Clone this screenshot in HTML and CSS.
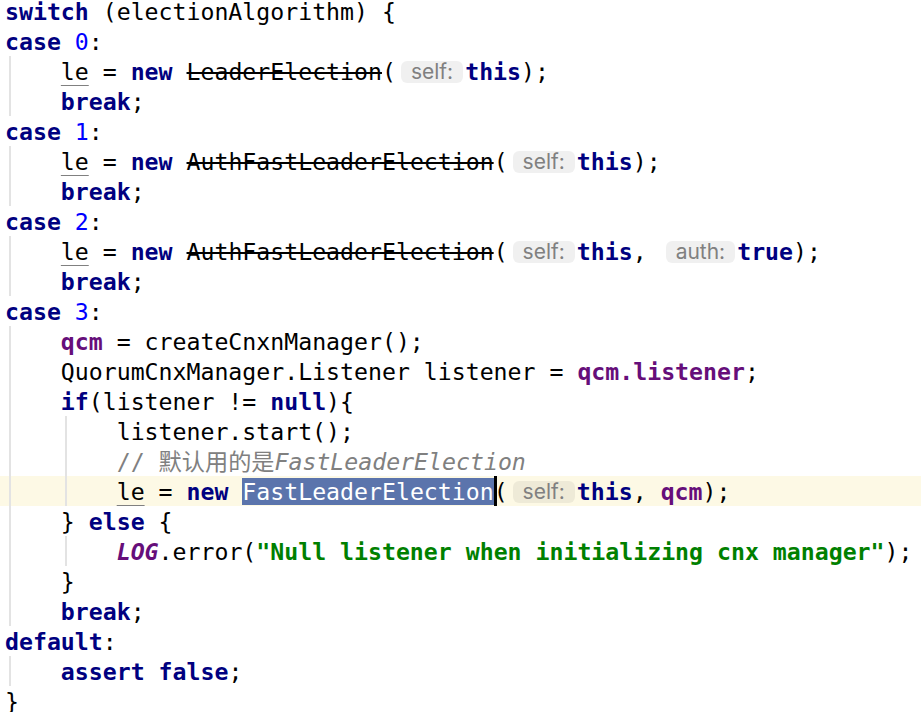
FILE: index.html
```html
<!DOCTYPE html>
<html lang="zh">
<head>
    <meta charset="UTF-8">
    <title>QuorumPeer.createElectionAlgorithm</title>
    <link rel="stylesheet" href="styles.css">
</head>
<body>
    <div class="editor">
<div class="line"><span class="kw">switch</span> (electionAlgorithm) {</div>
<div class="line"><span class="kw">case</span> <span class="num">0</span>:</div>
<div class="line g1">    <span class="var">le</span> = <span class="kw">new</span> <span class="dep">LeaderElection</span>(<span class="hint">self:</span><span class="kw">this</span>);</div>
<div class="line g1">    <span class="kw">break</span>;</div>
<div class="line"><span class="kw">case</span> <span class="num">1</span>:</div>
<div class="line g1">    <span class="var">le</span> = <span class="kw">new</span> <span class="dep">AuthFastLeaderElection</span>(<span class="hint">self:</span><span class="kw">this</span>);</div>
<div class="line g1">    <span class="kw">break</span>;</div>
<div class="line"><span class="kw">case</span> <span class="num">2</span>:</div>
<div class="line g1">    <span class="var">le</span> = <span class="kw">new</span> <span class="dep">AuthFastLeaderElection</span>(<span class="hint">self:</span><span class="kw">this</span>, <span class="hint">auth:</span><span class="kw">true</span>);</div>
<div class="line g1">    <span class="kw">break</span>;</div>
<div class="line"><span class="kw">case</span> <span class="num">3</span>:</div>
<div class="line g1">    <span class="fld">qcm</span> = createCnxnManager();</div>
<div class="line g1">    QuorumCnxManager.Listener listener = <span class="fld">qcm.listener</span>;</div>
<div class="line g1">    <span class="kw">if</span>(listener != <span class="kw">null</span>){</div>
<div class="line g1 g2">        listener.start();</div>
<div class="line g1 g2">        <span class="cmt">// 默认用的是<i>FastLeaderElection</i></span></div>
<div class="line g1 g2 current">        <span class="var">le</span> = <span class="kw">new</span> <span class="sel">FastLeaderElection</span>(<span class="hint">self:</span><span class="kw">this</span>, <span class="fld">qcm</span>);</div>
<div class="line g1">    } <span class="kw">else</span> {</div>
<div class="line g1 g2">        <span class="fld static">LOG</span>.error(<span class="str">"Null listener when initializing cnx manager"</span>);</div>
<div class="line g1">    }</div>
<div class="line g1">    <span class="kw">break</span>;</div>
<div class="line"><span class="kw">default</span>:</div>
<div class="line g1">    <span class="kw">assert</span> <span class="kw">false</span>;</div>
<div class="line">}</div>
    </div>
</body>
</html>
```

FILE: styles.css
```css
body {
    margin: 0;
    padding: 0;
    background: #fff;
    color: #000;
}

.editor {
    margin-top: -4px;
    font-family: "DejaVu Sans Mono", "Noto Sans CJK SC", monospace;
    font-size: 23.2px;
}

.line {
    height: 30px;
    box-sizing: border-box;
    padding: 3px 0 0 5px;
    line-height: 26px;
    white-space: pre;
}

/* indent guides */
.g1 {
    background: linear-gradient(#e3e3e3, #e3e3e3) no-repeat 9px 0 / 2px 100%;
}

.g1.g2 {
    background: linear-gradient(#e3e3e3, #e3e3e3) no-repeat 9px 0 / 2px 100%,
                linear-gradient(#e3e3e3, #e3e3e3) no-repeat 65px 0 / 2px 100%;
}

.line.current {
    background-color: #fdf9e5;
}

.kw {
    color: #000080;
    font-weight: bold;
}

.num {
    color: #0000ff;
}

.fld {
    color: #660e7a;
    font-weight: bold;
}

.static {
    font-style: italic;
}

.str {
    color: #008000;
    font-weight: bold;
}

.cmt {
    color: #808080;
}

.cmt i {
    font-style: italic;
}

.dep {
    text-decoration: line-through;
}

.var {
    text-decoration: underline;
    text-decoration-color: #808080;
    text-decoration-thickness: 1px;
    text-underline-offset: 5px;
}

.hint {
    display: inline-block;
    height: 22px;
    margin: 0 2px 0 5px;
    padding: 0 10px;
    border-radius: 6px;
    background: rgba(0, 0, 0, 0.06);
    color: #808080;
    font-family: Inter, "Noto Sans", sans-serif;
    font-size: 21px;
    line-height: 22px;
    vertical-align: 1px;
}

.sel {
    position: relative;
    background: #5b74ac;
    color: #fff;
}

/* caret */
.sel::after {
    content: "";
    position: absolute;
    right: -3px;
    top: -2px;
    width: 3px;
    height: 30px;
    background: #000;
}
```
